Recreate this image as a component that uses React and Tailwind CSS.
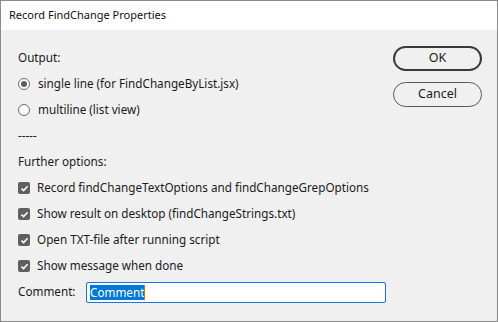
import React from "react";

const checks = [
  "Record findChangeTextOptions and findChangeGrepOptions",
  "Show result on desktop (findChangeStrings.txt)",
  "Open TXT-file after running script",
  "Show message when done",
];

function Radio({ checked }) {
  return (
    <span className="flex h-[12px] w-[12px] items-center justify-center rounded-full border border-[#6b6b6b] bg-white">
      {checked && <span className="h-[6px] w-[6px] rounded-full bg-[#5a5a5a]" />}
    </span>
  );
}

function Check() {
  return (
    <span className="flex h-[12px] w-[12px] items-center justify-center rounded-[2px] bg-[#606060]">
      <svg width="9" height="9" viewBox="0 0 9 9" fill="none">
        <path d="M1.5 4.6 L3.6 6.6 L7.6 2.2" stroke="#fff" strokeWidth="1.5" />
      </svg>
    </span>
  );
}

export default function App() {
  return (
    <div
      className="flex h-[322px] w-[498px] flex-col border border-[#8a8a8a] bg-[#f0f0f0] text-[11.7px] text-[#1b1b1b]"
      style={{ fontFamily: '"Noto Sans", "Open Sans", sans-serif' }}
    >
      <div className="flex h-[29px] shrink-0 items-center bg-white pl-[8px] text-[11px] text-[#111]">
        Record FindChange Properties
      </div>
      <div className="flex flex-1 pl-[17px] pr-[15px]">
        <div className="flex flex-1 flex-col pt-[15px]">
          <div className="flex h-[26px] items-center">Output:</div>
          <div className="flex h-[26px] items-center gap-[8px]">
            <Radio checked />
            <span>single line (for FindChangeByList.jsx)</span>
          </div>
          <div className="flex h-[26px] items-center gap-[8px]">
            <Radio />
            <span>multiline (list view)</span>
          </div>
          <div className="flex h-[26px] items-center">-----</div>
          <div className="flex h-[26px] items-center">Further options:</div>
          {checks.map((c) => (
            <div key={c} className="flex h-[26px] items-center gap-[7px]">
              <Check />
              <span>{c}</span>
            </div>
          ))}
          <div className="flex h-[26px] items-center">
            <span className="w-[68px]">Comment:</span>
            <div className="flex h-[21px] w-[300px] items-center rounded-[2px] border border-[#1a73e8] bg-white pl-[3px]">
              <span className="bg-[#0078d7] leading-[15px] text-white">Comment</span>
              <span className="h-[15px] w-[1px] bg-[#e07000]" />
            </div>
          </div>
        </div>
        <div className="flex w-[89px] flex-col gap-[11px] pt-[16px]">
          <button className="h-[25px] w-[89px] rounded-full border-2 border-[#3a3a3a] text-[12.5px] text-[#1b1b1b]">
            OK
          </button>
          <button className="h-[25px] w-[89px] rounded-full border border-[#5a5a5a] text-[12.5px] text-[#1b1b1b]">
            Cancel
          </button>
        </div>
      </div>
    </div>
  );
}
